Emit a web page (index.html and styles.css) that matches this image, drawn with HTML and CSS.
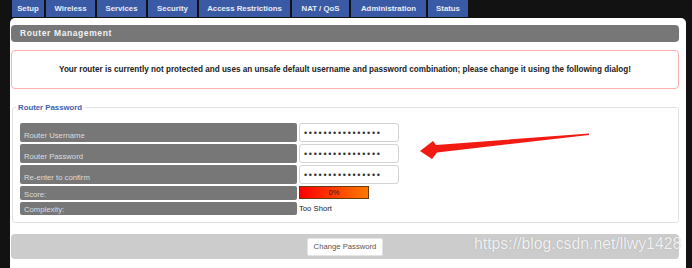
FILE: index.html
```html
<!DOCTYPE html>
<html lang="en">
<head>
    <meta charset="UTF-8">
    <title>Router Management</title>
    <link rel="stylesheet" href="styles.css">
</head>
<body>
    <nav class="tabs">
        <a class="tab tab-setup">Setup</a>
        <a class="tab tab-wireless">Wireless</a>
        <a class="tab tab-services">Services</a>
        <a class="tab tab-security">Security</a>
        <a class="tab tab-access">Access Restrictions</a>
        <a class="tab tab-nat">NAT / QoS</a>
        <a class="tab tab-admin">Administration</a>
        <a class="tab tab-status">Status</a>
    </nav>
    <div class="panel">
        <h2 class="panel-title">Router Management</h2>
        <div class="warning">Your router is currently not protected and uses an unsafe default username and password combination; please change it using the following dialog!</div>
        <fieldset class="group">
            <legend>Router Password</legend>
            <div class="rows">
                <div class="label row-tall">Router Username</div>
                <input class="field" type="password" value="xxxxxxxxxxxxxxxx" readonly>
                <div class="label row-tall">Router Password</div>
                <input class="field" type="password" value="xxxxxxxxxxxxxxxx" readonly>
                <div class="label row-tall">Re-enter to confirm</div>
                <input class="field" type="password" value="xxxxxxxxxxxxxxxx" readonly>
                <div class="label row-short">Score:</div>
                <div class="score"><div class="score-bar">0%</div></div>
                <div class="label row-short">Complexity:</div>
                <div class="complexity">Too Short</div>
            </div>
        </fieldset>
        <div class="actions">
            <button class="btn">Change Password</button>
        </div>
    </div>
    <svg class="arrow" width="692" height="268" viewBox="0 0 692 268">
        <polygon points="420,151 433,141 436,145 589,133.5 589,135 437,152.5 432,159" fill="#f21b14"/>
    </svg>
    <div class="watermark">https://blog.csdn.net/llwy1428</div>
</body>
</html>
```

FILE: styles.css
```css
body {
    margin: 0;
    background: #121212;
    font-family: 'Liberation Sans', Arial, sans-serif;
    position: relative;
    height: 268px;
    overflow: hidden;
}
.tabs {
    display: flex;
    gap: 2px;
    padding-left: 12px;
    height: 17px;
}
.tab {
    display: block;
    box-sizing: border-box;
    background: #3b5aa6;
    color: #e8edf7;
    font-size: 7.8px;
    font-weight: bold;
    line-height: 17px;
    text-align: center;
}
.tab-setup { width: 32px; }
.tab-wireless { width: 49px; }
.tab-services { width: 49px; }
.tab-security { width: 49px; }
.tab-access { width: 91px; }
.tab-nat { width: 57px; }
.tab-admin { width: 75px; }
.tab-status { width: 40px; }
.panel {
    margin: 1px 0 0 10px;
    width: 676px;
    height: 260px;
    box-sizing: border-box;
    background: #fff;
    border-radius: 5px 5px 0 0;
    padding: 7px 7px 0 1px;
}
.panel-title {
    margin: 0;
    height: 17px;
    background: #777;
    border-radius: 4px;
    color: #f2f2f2;
    font-size: 8.5px;
    letter-spacing: 0.6px;
    line-height: 17px;
    padding-left: 9px;
}
.warning {
    margin-top: 8px;
    height: 39px;
    box-sizing: border-box;
    border: 1.5px solid #ffaeae;
    border-radius: 4px;
    display: flex;
    align-items: center;
    justify-content: center;
    font-size: 8.15px;
    font-weight: bold;
    color: #222;
}
.group {
    margin: 14px 0 0 1px;
    padding: 11px 7px 7px 7px;
    border: 1px solid #e2e2e2;
    border-radius: 3px;
}
.group legend {
    color: #4161ad;
    font-size: 7.8px;
    font-weight: bold;
    padding: 0 3px 0 2px;
    margin-left: -4px;
}
.rows {
    display: grid;
    grid-template-columns: 277px 100px;
    column-gap: 2px;
    row-gap: 2px;
}
.label {
    background: #777;
    color: #ddd;
    font-size: 7.7px;
    border-radius: 2px;
    display: flex;
    align-items: flex-end;
    padding: 0 0 2px 4px;
    box-sizing: border-box;
}
.row-tall { height: 19px; }
.row-short { height: 13.5px; padding-bottom: 1px; }
.field {
    box-sizing: border-box;
    width: 100px;
    height: 19px;
    margin: 0;
    border: 1px solid #d3d3d3;
    border-radius: 3px;
    padding: 0 4px;
    font-family: 'Liberation Sans', Arial, sans-serif;
    font-size: 9px;
    letter-spacing: 1.7px;
    color: #333;
    outline: none;
}
.score {
    display: flex;
    align-items: center;
}
.score-bar {
    width: 70px;
    height: 13px;
    box-sizing: border-box;
    border: 1px solid #6b3a10;
    background: linear-gradient(to right, #ff0000, #ff7a00);
    color: #222;
    font-size: 7.5px;
    text-align: center;
    line-height: 11px;
}
.complexity {
    font-size: 7.7px;
    color: #222;
    display: flex;
    align-items: center;
}
.actions {
    margin-top: 11px;
    height: 25px;
    background: #ccc;
    border-radius: 4px;
    display: flex;
    align-items: center;
    justify-content: center;
}
.btn {
    width: 76px;
    height: 18px;
    background: #fff;
    border: 1px solid #e4e4e4;
    border-radius: 2px;
    font-family: 'Liberation Sans', Arial, sans-serif;
    font-size: 7.7px;
    color: #555;
    padding: 0;
}
.arrow {
    position: absolute;
    left: 0;
    top: 0;
    pointer-events: none;
}
.watermark {
    position: absolute;
    left: 474px;
    top: 235px;
    font-family: 'Liberation Sans', Arial, sans-serif;
    font-size: 15.8px;
    color: rgba(255, 255, 255, 0.85);
    text-shadow: 0 0 1px rgba(120, 120, 120, 0.5);
}
```
